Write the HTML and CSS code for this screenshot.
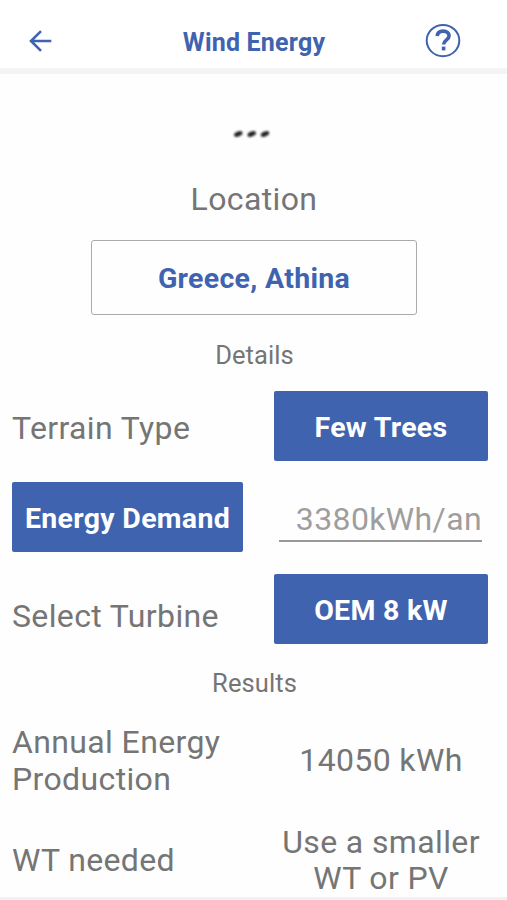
FILE: index.html
```html
<!DOCTYPE html>
<html lang="en">
<head>
<meta charset="utf-8">
<title>Wind Energy</title>
<link rel="stylesheet" href="styles.css">
</head>
<body>
<div class="screen">
  <header class="bar">
    <svg class="back" viewBox="0 0 24 24"><path d="M22.3 12H2M12 2.1 2 12l10 9.9"/></svg>
    <h1 class="title">Wind Energy</h1>
    <svg class="help" viewBox="0 0 36 36"><ellipse cx="18" cy="17.6" rx="16.3" ry="15.6"/><path class="mark" d="M12.2 13.2c.2-3.3 2.5-5.1 6-5.1 3.6 0 5.9 1.8 5.9 4.7 0 4-5.5 4.2-5.5 8.8"/><path class="mark" d="M18.6 23.6v3.8"/></svg>
  </header>
  <main class="content">
    <svg class="dots" viewBox="0 0 40 10"><ellipse cx="5.3" cy="5" rx="4.4" ry="2.5" transform="rotate(-22 5.3 5)"/><ellipse cx="18.7" cy="5" rx="4.4" ry="2.5" transform="rotate(-22 18.7 5)"/><ellipse cx="32" cy="5" rx="4.4" ry="2.5" transform="rotate(-22 32 5)"/></svg>
    <h2 class="heading">Location</h2>
    <button class="location">Greece, Athina</button>
    <h3 class="section details">Details</h3>
    <div class="row"><span class="label">Terrain Type</span><button class="btn">Few Trees</button></div>
    <div class="row"><button class="btn demand">Energy Demand</button><div class="field">3380kWh/an</div></div>
    <div class="row"><span class="label turbine">Select Turbine</span><button class="btn">OEM 8 kW</button></div>
    <h3 class="section results">Results</h3>
    <div class="result first"><span>Annual Energy<br>Production</span><span class="value">14050 kWh</span></div>
    <div class="result"><span>WT needed</span><span class="value">Use a smaller<br>WT or PV</span></div>
  </main>
  <div class="bottom"></div>
</div>
</body>
</html>
```
FILE: styles.css
```css
* { box-sizing: border-box; margin: 0; }
body { background: #fefefe; color: #757575; font: 400 32px/36.5px Roboto, sans-serif; letter-spacing: .37px; }
.screen { display: flex; flex-direction: column; width: 507px; height: 900px; overflow: hidden; }
.bar { display: grid; grid-template-columns: 80px 1fr 82px; align-items: center; height: 74px; flex: none; padding-top: 14px; background: #fff; border-bottom: 6px solid #f4f4f4; }
.back { width: 24px; height: 24px; margin-left: 29px; fill: none; stroke: #3f63ae; stroke-width: 2.6; }
.title { padding: 3px 0 0 3px; text-align: center; color: #3f63ae; font-size: 25px; line-height: 30px; font-weight: 700; letter-spacing: .2px; }
.help { width: 36px; height: 36px; fill: none; stroke: #3f63ae; stroke-width: 2; }
.mark { stroke-width: 3.6; }
.content { display: flex; flex-direction: column; flex: 1; min-height: 0; }
.content > * { flex: none; }
.dots { width: 40px; height: 10px; margin: 55px 0 0 233px; overflow: visible; fill: #222; filter: blur(1px); }
.heading { margin-top: 42px; padding-left: 1px; text-align: center; font-size: 32px; line-height: 37px; height: 36.5px; font-weight: 400; }
button { font: 700 28.5px/34px Roboto, sans-serif; letter-spacing: .3px; }
.location { width: 326px; height: 75px; margin: 22px 0 0 91px; padding-top: 5px; color: #3f63ae; background: #fefefe; border: 1.5px solid #aaa; border-radius: 3px; }
.section { padding-left: 2px; text-align: center; font-size: 25.5px; line-height: 31px; height: 30px; font-weight: 400; letter-spacing: .1px; }
.details { margin: 25px 0 21px; }
.row { display: flex; justify-content: space-between; align-items: center; height: 70px; padding: 0 19px 0 12px; margin-bottom: 21.5px; }
.btn { width: 214px; height: 70px; padding: 4px 0 0; border: 0; border-radius: 2px; background: #4063af; color: #fff; }
.demand { width: 231px; }
.label { padding-top: 5px; }
.turbine { padding-top: 15px; }
.field { width: 203px; height: 46px; margin: 3px 6px 0 0; padding-top: 5px; border-bottom: 2px solid #999; color: #9e9e9e; text-align: right; }
.results { margin: 3px 0 26px; }
.result { display: grid; grid-template-columns: 262px 214px; align-items: center; height: 73px; padding-left: 12px; margin-bottom: 26.5px; }
.value { text-align: center; }
.bottom { height: 3px; flex: none; background: #f1f1f1; }
```
